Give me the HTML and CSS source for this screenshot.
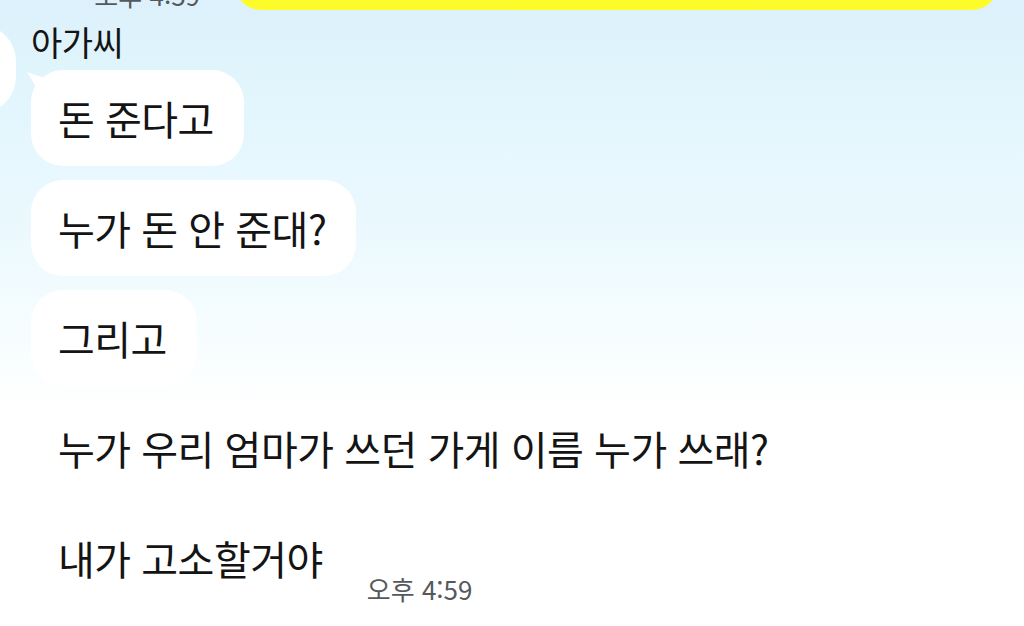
FILE: index.html
```html
<!DOCTYPE html>
<html lang="ko">
<head>
    <meta charset="UTF-8">
    <meta name="viewport" content="width=device-width, initial-scale=1.0">
    <title>채팅</title>
    <link rel="stylesheet" href="styles.css">
</head>
<body>

<main class="chat">
    <div class="me-row">
        <span class="time">오후 4:59</span>
        <div class="bubble-me"></div>
    </div>

    <div class="them">
        <div class="avatar"></div>
        <div class="msgs">
            <div class="name">아가씨</div>
            <div class="row">
                <div class="bubble first">돈 준다고</div>
            </div>
            <div class="row">
                <div class="bubble">누가 돈 안 준대?</div>
            </div>
            <div class="row">
                <div class="bubble">그리고</div>
            </div>
            <div class="row">
                <div class="bubble">누가 우리 엄마가 쓰던 가게 이름 누가 쓰래?</div>
            </div>
            <div class="row">
                <div class="bubble">내가 고소할거야</div>
                <span class="time">오후 4:59</span>
            </div>
        </div>
    </div>
</main>

</body>
</html>
```

FILE: styles.css
```css
html, body {
    margin: 0;
    padding: 0;
}
body {
    width: 1024px;
    height: 626px;
    overflow: hidden;
    font-family: "Noto Sans CJK KR", "Noto Sans", sans-serif;
    color: #141414;
    background: linear-gradient(to bottom, #dcf1fb 0, #e3f6fd 110px, #ebf9fe 230px, #f6fdff 330px, #fff 410px);
}
.chat {
    display: flex;
    flex-direction: column;
}
.me-row {
    display: flex;
    justify-content: flex-end;
    align-items: flex-end;
    gap: 35px;
    height: 62px;
    margin-top: -52px;
    padding-right: 26px;
}
.bubble-me {
    width: 763px;
    height: 62px;
    background: #fdfb2a;
    border-radius: 0 0 26px 26px;
}
.time {
    font-size: 26px;
    line-height: 26px;
    color: #55595c;
    white-space: nowrap;
}
.me-row .time {
    margin-bottom: 2px;
}
.them {
    display: flex;
    gap: 15px;
    margin-top: 12px;
}
.avatar {
    flex: none;
    width: 90px;
    height: 88px;
    margin-left: -74px;
    margin-top: 3px;
    background: #fff;
    border-radius: 36px;
}
.msgs {
    display: flex;
    flex-direction: column;
    gap: 14px;
}
.name {
    font-size: 34px;
    line-height: 40px;
    margin-bottom: -6px;
    letter-spacing: -0.5px;
}
.row {
    display: flex;
    align-items: flex-end;
    gap: 14px;
}
.bubble {
    position: relative;
    display: flex;
    align-items: center;
    height: 96px;
    padding: 0 30px 0 27px;
    background: #fff;
    border-radius: 32px;
    font-size: 40px;
    letter-spacing: -0.5px;
    white-space: nowrap;
}
.bubble.first::before {
    content: "";
    position: absolute;
    left: -4px;
    top: 2px;
    width: 26px;
    height: 26px;
    background: #fff;
    clip-path: polygon(0 0, 100% 35%, 60% 100%);
}
.row .time {
    margin-bottom: 4px;
}
```
